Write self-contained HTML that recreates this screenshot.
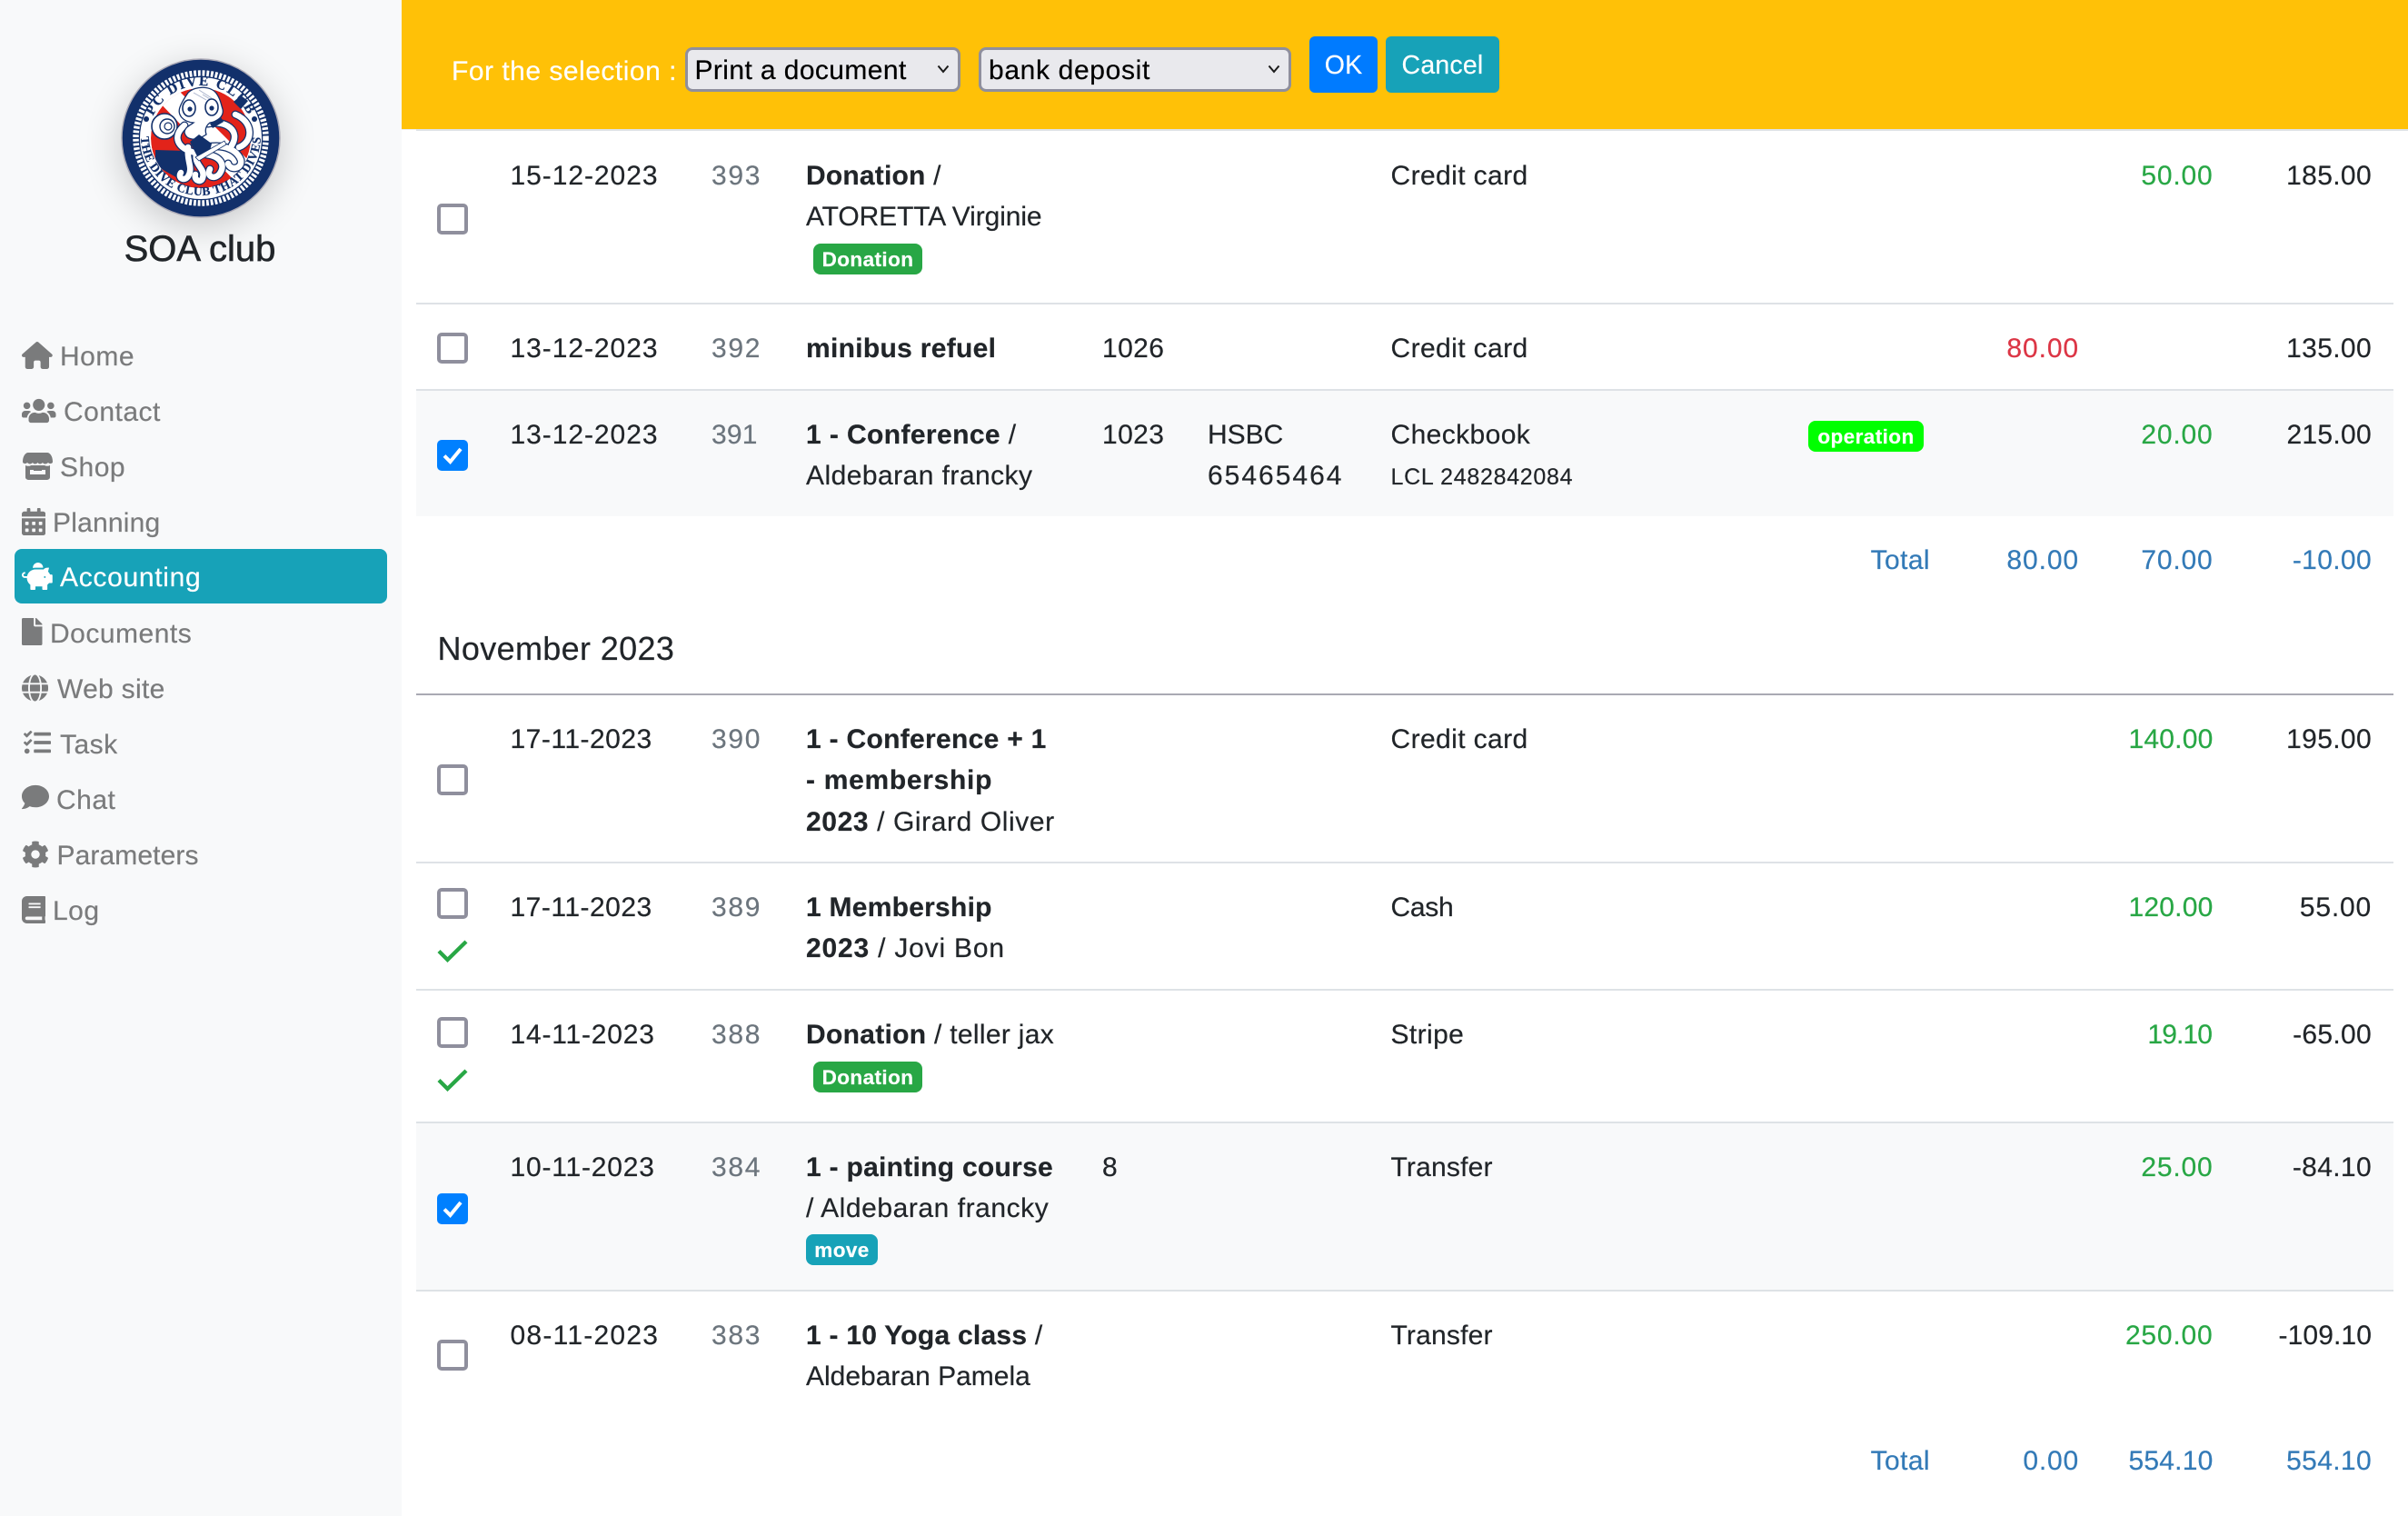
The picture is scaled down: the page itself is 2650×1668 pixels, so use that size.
<!DOCTYPE html>
<html><head><meta charset="utf-8"><title>SOA club</title>
<style>
*{box-sizing:border-box}
html,body{margin:0;padding:0;background:#fff}
body{width:2650px;height:1668px;position:relative;overflow:hidden;font-family:"Liberation Sans",sans-serif;font-size:30px;color:#212529;-webkit-text-stroke:.2px}
.a,.t,.n,.r{position:absolute;white-space:nowrap}
.t{line-height:45px;letter-spacing:.4px;margin-top:.5px}
.n{line-height:45px;letter-spacing:.8px;margin-top:.5px}
.r{line-height:45px;letter-spacing:.8px;margin-top:.5px}
.m{color:#6c757d;letter-spacing:1.7px}.g{color:#28a745}.x{color:#dc3545}.b{color:#337ab7}
b{font-weight:700}
.sb{position:absolute;left:0;top:0;width:442px;height:1668px;background:#f8f9fa}
.nv{position:absolute;line-height:45px;color:#7a7b7c;letter-spacing:.5px;white-space:nowrap;margin-top:.5px}
.ic{position:absolute;fill:#7a7b7c;height:30px}
.ln{position:absolute;left:458px;width:2176px;height:2px;background:#dee2e6}
.bg{position:absolute;left:458px;width:2176px;background:#f8f9fa}
.cb{position:absolute;left:481px;width:34px;height:34px;border:4px solid #8f8f9d;border-radius:5px;background:#fff}
.cc{position:absolute;left:481px;width:34px;height:34px;border-radius:5px;background:#0080ff}
.bd{position:absolute;color:#fff;font-weight:700;font-size:22.5px;line-height:35px;height:34px;text-align:center;border-radius:8px;letter-spacing:.42px}
.sel{position:absolute;top:52px;height:49px;background:#e9e9ed;border:3px solid #8f8f9d;border-radius:8px;color:#000;line-height:45px;letter-spacing:.4px}
.btn{position:absolute;top:40px;height:62px;border-radius:6px;color:#fff;text-align:center;line-height:64px;font-size:28.5px;letter-spacing:.2px}
</style></head><body>

<div class="sb"></div>
<div class="a" style="left:134px;top:65px;width:174px;height:174px;border-radius:50%;box-shadow:0 10px 42px rgba(0,0,0,.2)"></div>
<svg class="a" style="left:130px;top:61px;-webkit-text-stroke:0" width="182" height="182" viewBox="-91 -91 182 182">
<defs>
<clipPath id="cl"><circle r="55"/></clipPath>
<path id="tp" d="M-58 0A58 58 0 0 1 58 0"/>
<path id="bp" d="M-66 -3A66 66 0 0 0 66 -3"/>
</defs>
<circle r="87" fill="#12306b" stroke="#aeacb8" stroke-width="1.5"/>
<circle r="71.500" fill="none" stroke="#fff" stroke-width="6.500" stroke-dasharray="2.800 1.900"/>
<circle r="67" fill="#fff"/>
<g clip-path="url(#cl)">
<circle r="55" fill="#e2231a"/>
<path d="M-50 -44L-32 -60 60 32 42 52Z" fill="#fff"/>
<path d="M-50 13L-16 14 -12 34 -22 46 -50 30Z" fill="#12306b"/>
</g>
<circle cx="-60" cy="-21" r="3" fill="#12306b"/>
<circle cx="59" cy="-21" r="3" fill="#12306b"/>
<text font-family="Liberation Serif,serif" font-weight="700" font-size="15.500" letter-spacing="1.800" fill="#12306b" stroke="#12306b" stroke-width=".25"><textPath href="#tp" startOffset="50%" text-anchor="middle">PC DIVE CLUB</textPath></text>
<text font-family="Liberation Serif,serif" font-weight="700" font-size="13.500" letter-spacing=".5" fill="#12306b" stroke="#12306b" stroke-width=".2"><textPath href="#bp" startOffset="50%" text-anchor="middle">THE DIVE CLUB THAT DIVES</textPath></text>
<circle cx="-40" cy="-13" r="14" fill="#fff" stroke="#12306b" stroke-width="1.600"/>
<circle cx="-37" cy="-13" r="8" fill="none" stroke="#12306b" stroke-width="1.400"/>
<circle cx="-36" cy="-13" r="4" fill="none" stroke="#12306b" stroke-width="1.200"/>
<path d="M36 -40l8 -7 8 6 -8 9z" fill="#12306b"/>
<g fill="none" stroke-linecap="round">
<g stroke="#12306b" stroke-width="9">
<path d="M38 -26C58 -18 58 4 42 10"/>
<path d="M-14 10C-16 26 -8 32 -14 42 -18 48 -26 44 -22 38"/>
<path d="M-4 14C-10 30 6 32 2 44 0 50 -8 46 -6 40"/>
<path d="M6 10C28 6 40 14 44 24 46 34 32 36 30 28"/>
<path d="M6 18C22 20 28 30 20 40 14 46 6 42 10 34"/>
<path d="M-18 -14C-32 -2 -26 12 -6 16"/>
<path d="M8 -16C28 -20 44 -8 34 8"/>
</g>
<g stroke="#fff" stroke-width="6.500">
<path d="M38 -26C58 -18 58 4 42 10"/>
<path d="M-14 10C-16 26 -8 32 -14 42 -18 48 -26 44 -22 38"/>
<path d="M-4 14C-10 30 6 32 2 44 0 50 -8 46 -6 40"/>
<path d="M6 10C28 6 40 14 44 24 46 34 32 36 30 28"/>
<path d="M6 18C22 20 28 30 20 40 14 46 6 42 10 34"/>
<path d="M-18 -14C-32 -2 -26 12 -6 16"/>
<path d="M8 -16C28 -20 44 -8 34 8"/>
</g>
</g>
<path d="M-14 -50C-6 -58 12 -58 18 -48 22 -42 22 -38 24 -32 26 -24 18 -18 10 -17 6 -14 4 -10 6 -4 -6 4 -16 2 -18 -6 -18 -12 -12 -14 -8 -17 -20 -18 -26 -26 -23 -34 -21 -40 -18 -44 -14 -50Z" fill="#fff" stroke="#12306b" stroke-width="1.300"/>
<path d="M-8 -50l14 8M-2 -53l14 9M2 -48l8 5" stroke="#aab4cc" stroke-width="1" fill="none"/>
<ellipse cx="-13" cy="-33" rx="7" ry="9" fill="#fff" stroke="#12306b" stroke-width="1.600"/>
<ellipse cx="12" cy="-34" rx="7" ry="9" fill="#fff" stroke="#12306b" stroke-width="1.600"/>
<circle cx="-12" cy="-32" r="2.600" fill="#12306b"/>
<circle cx="12" cy="-33" r="2.600" fill="#12306b"/>
<path d="M10 -16l12 -7 3 5 -12 7z" fill="#12306b"/>
<path d="M-12 4L-2 -4 12 6 10 14 -4 20Z" fill="#12306b"/>
<path d="M-6 21L26 3 28 7 -2 25Z" fill="#fff" stroke="#12306b" stroke-width=".8"/>
</svg>
<div class="a" style="left:-1px;width:442px;text-align:center;top:250px;line-height:48px;font-size:40px;color:#212529;-webkit-text-stroke:.6px">SOA club</div>

<div class="a" style="left:16px;top:604px;width:410px;height:60px;background:#17a2b8;border-radius:8px"></div>

<svg class="ic" style="left:24px;top:376px" viewBox="0 0 576 512"><path d="M575.800 255.500c0 18-15 32.100-32 32.100h-32l.7 160.200c0 2.700-.2 5.400-.5 8.100V472c0 22.100-17.900 40-40 40H456c-1.100 0-2.200 0-3.300-.1-1.400.1-2.800.1-4.200.1H392c-22.100 0-40-17.900-40-40V384c0-17.700-14.300-32-32-32H256c-17.700 0-32 14.300-32 32v88c0 22.100-17.900 40-40 40H128.100c-1.500 0-3-.1-4.500-.2-1.200.1-2.400.2-3.600.2H104c-22.100 0-40-17.900-40-40V360c0-.9 0-1.900.1-2.800V287.600H32c-18 0-32-14-32-32.100 0-9 3-17 10-24L266.400 8c7-7 15-8 22-8s15 2 21 7L564.800 231.500c8 7 12 15 11 24z"/></svg>
<div class="nv" style="left:66px;top:369px">Home</div>

<svg class="ic" style="left:24px;top:437px" viewBox="0 0 640 512"><path d="M96 224c35.300 0 64-28.700 64-64s-28.700-64-64-64-64 28.700-64 64 28.700 64 64 64zm448 0c35.300 0 64-28.700 64-64s-28.700-64-64-64-64 28.700-64 64 28.700 64 64 64zm32 32h-64c-17.600 0-33.500 7.100-45.100 18.600 40.300 22.100 68.900 62 75.100 109.400h66c17.700 0 32-14.300 32-32v-32c0-35.300-28.700-64-64-64zm-256 0c61.900 0 112-50.100 112-112S381.900 32 320 32 208 82.100 208 144s50.100 112 112 112zm76.800 32h-8.300c-20.800 10-43.900 16-68.500 16s-47.600-6-68.500-16h-8.300C179.600 288 128 339.600 128 403.200V432c0 26.500 21.500 48 48 48h288c26.500 0 48-21.500 48-48v-28.800c0-63.600-51.600-115.200-115.200-115.200zm-223.700-13.400C161.500 263.100 145.600 256 128 256H64c-35.300 0-64 28.700-64 64v32c0 17.700 14.300 32 32 32h65.900c6.300-47.400 34.900-87.300 75.200-109.400z"/></svg>
<div class="nv" style="left:70px;top:430px">Contact</div>

<svg class="ic" style="left:25px;top:498px;width:33px" viewBox="0 0 33 30"><path d="M6 0H27C30 0 33 4 33 10 33 12 30 13 28 11 26 13 23 13 22 11 20 13 18 13 16.500 11 15 13 12 13 11 11 9 13 7 13 5 11 3 13 0 12 0 10 0 4 3 0 6 0Z"/><path fill-rule="evenodd" d="M3 14C5 15 8 15 9 14V14H24C26 15 28 15 30 14V27C30 29 28 30 26 30H7C5 30 3 29 3 27ZM8 19V24H25V19H21V20H12V19Z"/></svg>
<div class="nv" style="left:66px;top:491px">Shop</div>

<svg class="ic" style="left:24px;top:559px" viewBox="0 0 448 512"><path d="M0 464c0 26.500 21.500 48 48 48h352c26.500 0 48-21.500 48-48V192H0v272zm320-196c0-6.600 5.400-12 12-12h40c6.600 0 12 5.400 12 12v40c0 6.600-5.400 12-12 12h-40c-6.600 0-12-5.400-12-12v-40zm0 128c0-6.600 5.400-12 12-12h40c6.600 0 12 5.400 12 12v40c0 6.600-5.400 12-12 12h-40c-6.600 0-12-5.400-12-12v-40zM192 268c0-6.600 5.400-12 12-12h40c6.600 0 12 5.400 12 12v40c0 6.600-5.400 12-12 12h-40c-6.600 0-12-5.400-12-12v-40zm0 128c0-6.600 5.400-12 12-12h40c6.600 0 12 5.400 12 12v40c0 6.600-5.400 12-12 12h-40c-6.600 0-12-5.400-12-12v-40zM64 268c0-6.600 5.400-12 12-12h40c6.600 0 12 5.400 12 12v40c0 6.600-5.400 12-12 12H76c-6.600 0-12-5.400-12-12v-40zm0 128c0-6.600 5.400-12 12-12h40c6.600 0 12 5.400 12 12v40c0 6.600-5.400 12-12 12H76c-6.600 0-12-5.400-12-12v-40zM400 64h-48V16c0-8.800-7.200-16-16-16h-32c-8.800 0-16 7.200-16 16v48H160V16c0-8.800-7.200-16-16-16h-32c-8.800 0-16 7.200-16 16v48H48C21.500 64 0 85.500 0 112v48h448v-48c0-26.500-21.500-48-48-48z"/></svg>
<div class="nv" style="left:58px;top:552px;letter-spacing:.2px">Planning</div>

<svg class="ic" style="left:24px;top:619px;fill:#fff" viewBox="0 0 576 512"><path d="M560 224h-29.500c-8.800-20-21.600-37.700-37.400-52.500L512 96h-32c-29.400 0-55.400 13.500-73 34.300-7.600-1.100-15.100-2.300-23-2.300H256c-77.400 0-141.900 55-156.800 128H56c-14.800 0-26.500-13.500-23.500-28.800C34.700 215.800 45.400 208 57 208h1c3.300 0 6-2.700 6-6v-20c0-3.300-2.700-6-6-6-28.500 0-53.900 20.400-57.500 48.600C-3.900 258.800 22.700 288 56 288h40c0 52.200 25.400 98.100 64 127.300V496c0 8.800 7.200 16 16 16h64c8.800 0 16-7.200 16-16v-48h128v48c0 8.800 7.200 16 16 16h64c8.800 0 16-7.200 16-16v-80.700c11.800-8.900 22.300-19.400 31.300-31.300H560c8.800 0 16-7.200 16-16V240c0-8.800-7.200-16-16-16zm-128 64c-8.800 0-16-7.200-16-16s7.200-16 16-16 16 7.200 16 16-7.200 16-16 16zM256 96h128c5.400 0 10.700.4 15.900.8 0-.3.1-.5.1-.8 0-53-43-96-96-96s-96 43-96 96c0 2.100.5 4.100.6 6.200 15.200-3.900 31-6.200 47.400-6.200z"/></svg>
<div class="nv" style="left:66px;top:612px;color:#fff;letter-spacing:.7px">Accounting</div>

<svg class="ic" style="left:24px;top:680px" viewBox="0 0 384 512"><path d="M224 136V0H24C10.700 0 0 10.700 0 24v464c0 13.300 10.700 24 24 24h336c13.300 0 24-10.700 24-24V160H248c-13.200 0-24-10.800-24-24zm160-14.100v6.100H256V0h6.100c6.400 0 12.500 2.500 17 7l97.900 98c4.500 4.500 7 10.600 7 16.900z"/></svg>
<div class="nv" style="left:55px;top:674px">Documents</div>

<svg class="ic" style="left:24px;top:742px" viewBox="0 0 496 512"><path d="M336.500 160C322 70.700 287.800 8 248 8s-74 62.700-88.500 152h177zM152 256c0 22.200 1.200 43.500 3.300 64h185.300c2.100-20.500 3.300-41.800 3.300-64s-1.200-43.500-3.300-64H155.300c-2.100 20.500-3.300 41.800-3.300 64zm324.700-96c-28.600-67.900-86.500-120.400-158-141.600 24.400 33.800 41.200 84.700 50 141.600h108zM177.200 18.400C105.800 39.600 47.800 92.100 19.300 160h108c8.700-56.900 25.500-107.800 49.900-141.600zM487.400 192H372.700c2.100 21 3.300 42.500 3.300 64s-1.200 43-3.300 64h114.600c5.500-20.500 8.600-41.800 8.600-64s-3.100-43.500-8.500-64zM120 256c0-21.500 1.200-43 3.300-64H8.600C3.200 212.500 0 233.800 0 256s3.200 43.500 8.600 64h114.600c-2-21-3.200-42.500-3.200-64zm39.500 96c14.500 89.300 48.700 152 88.500 152s74-62.700 88.500-152h-177zm159.300 141.600c71.400-21.200 129.400-73.700 158-141.600h-108c-8.800 56.900-25.600 107.800-50 141.600zM19.300 352c28.600 67.900 86.500 120.400 158 141.600-24.400-33.800-41.200-84.700-50-141.600h-108z"/></svg>
<div class="nv" style="left:63px;top:735px;letter-spacing:.3px">Web site</div>

<svg class="ic" style="left:26px;top:802px" viewBox="0 0 512 512"><path d="M139.610 35.500a12 12 0 0 0-17 0L58.930 98.810l-22.700-22.120a12 12 0 0 0-17 0L3.530 92.410a12 12 0 0 0 0 17l47.590 47.400a12.780 12.780 0 0 0 17.610 0l15.590-15.620L156.520 69a12.090 12.090 0 0 0 .09-17zm0 159.190a12 12 0 0 0-17 0l-63.680 63.720-22.700-22.100a12 12 0 0 0-17 0L3.530 252a12 12 0 0 0 0 17L51 316.500a12.770 12.770 0 0 0 17.600 0l15.700-15.690 72.200-72.220a12 12 0 0 0 .09-16.900zM64 368c-26.490 0-48.590 21.500-48.590 48S37.530 464 64 464a48 48 0 0 0 0-96zm432 16H208a16 16 0 0 0-16 16v32a16 16 0 0 0 16 16h288a16 16 0 0 0 16-16v-32a16 16 0 0 0-16-16zm0-320H208a16 16 0 0 0-16 16v32a16 16 0 0 0 16 16h288a16 16 0 0 0 16-16V80a16 16 0 0 0-16-16zm0 160H208a16 16 0 0 0-16 16v32a16 16 0 0 0 16 16h288a16 16 0 0 0 16-16v-32a16 16 0 0 0-16-16z"/></svg>
<div class="nv" style="left:66px;top:796px">Task</div>

<svg class="ic" style="left:24px;top:862px" viewBox="0 0 512 512"><path d="M256 32C114.600 32 0 125.100 0 240c0 49.600 21.400 95 57 130.700C44.500 421.100 2.700 466 2.200 466.500c-2.200 2.300-2.800 5.700-1.500 8.700S4.800 480 8 480c66.300 0 116-31.800 140.600-51.400 32.700 12.300 69 19.400 107.400 19.400 141.400 0 256-93.100 256-208S397.400 32 256 32z"/></svg>
<div class="nv" style="left:62px;top:857px">Chat</div>

<svg class="ic" style="left:24px;top:925px" viewBox="0 0 512 512"><path d="M487.400 315.700l-42.600-24.600c4.300-23.200 4.300-47 0-70.200l42.600-24.600c4.900-2.800 7.100-8.600 5.500-14-11.100-35.600-30-67.800-54.700-94.600-3.800-4.100-10-5.100-14.800-2.300L380.800 110c-17.900-15.400-38.500-27.300-60.800-35.100V25.800c0-5.600-3.900-10.500-9.400-11.700-36.700-8.200-74.300-7.800-109.200 0-5.500 1.200-9.400 6.100-9.400 11.700V75c-22.200 7.900-42.800 19.800-60.800 35.100L88.700 85.500c-4.900-2.800-11-1.900-14.800 2.300-24.700 26.700-43.600 58.900-54.700 94.600-1.700 5.400.6 11.200 5.500 14L67.300 221c-4.300 23.200-4.300 47 0 70.200l-42.600 24.600c-4.900 2.800-7.100 8.600-5.500 14 11.100 35.600 30 67.800 54.700 94.600 3.800 4.100 10 5.100 14.800 2.300l42.600-24.600c17.900 15.400 38.500 27.300 60.800 35.100v49.200c0 5.600 3.900 10.500 9.400 11.700 36.700 8.200 74.300 7.800 109.200 0 5.500-1.200 9.400-6.100 9.400-11.700v-49.200c22.200-7.900 42.800-19.800 60.800-35.100l42.600 24.600c4.900 2.800 11 1.900 14.800-2.300 24.700-26.700 43.600-58.900 54.700-94.600 1.500-5.500-.7-11.300-5.600-14.100zM256 336c-44.100 0-80-35.900-80-80s35.900-80 80-80 80 35.900 80 80-35.900 80-80 80z"/></svg>
<div class="nv" style="left:62.500px;top:918px;letter-spacing:.1px">Parameters</div>

<svg class="ic" style="left:24px;top:986px" viewBox="0 0 448 512"><path d="M448 360V24c0-13.300-10.700-24-24-24H96C43 0 0 43 0 96v320c0 53 43 96 96 96h328c13.300 0 24-10.700 24-24v-16c0-7.500-3.500-14.300-8.900-18.700-4.200-15.400-4.200-59.300 0-74.700 5.400-4.300 8.900-11.100 8.900-18.600zM128 134c0-3.300 2.700-6 6-6h212c3.300 0 6 2.700 6 6v20c0 3.300-2.700 6-6 6H134c-3.300 0-6-2.700-6-6v-20zm0 64c0-3.300 2.700-6 6-6h212c3.300 0 6 2.700 6 6v20c0 3.300-2.700 6-6 6H134c-3.300 0-6-2.700-6-6v-20zm253.400 250H96c-17.700 0-32-14.300-32-32 0-17.600 14.400-32 32-32h285.400c-1.900 17.100-1.900 46.900 0 64z"/></svg>
<div class="nv" style="left:58px;top:979px">Log</div>

<!-- top bar -->
<div class="a" style="left:442px;top:0;width:2208px;height:142px;background:#ffc107"></div>
<div class="a" style="left:442px;top:142px;width:2208px;height:1px;background:#eceef0"></div>
<div class="a" style="left:458px;top:142px;width:2192px;height:2px;background:#dee2e6"></div>
<div class="t" style="left:497px;top:55px;color:#fff;letter-spacing:.5px">For the selection :</div>
<div class="sel" style="left:753.500px;width:303px;padding-left:8px">Print a document
<svg class="a" style="left:274px;top:16px" width="14" height="10" viewBox="0 0 14 10"><path d="M1.500 1.500L7 8 12.500 1.500" fill="none" stroke="#1a1a1a" stroke-width="2"/></svg></div>
<div class="sel" style="left:1077px;width:344px;padding-left:8px;letter-spacing:.65px">bank deposit
<svg class="a" style="left:315px;top:16px" width="14" height="10" viewBox="0 0 14 10"><path d="M1.500 1.500L7 8 12.500 1.500" fill="none" stroke="#1a1a1a" stroke-width="2"/></svg></div>
<div class="btn" style="left:1441px;width:75px;background:#007bff">OK</div>
<div class="btn" style="left:1525px;width:125px;background:#17a2b8">Cancel</div>

<!-- rows backgrounds -->
<div class="bg" style="top:430px;height:138px"></div>
<div class="bg" style="top:1236px;height:183px"></div>

<div class="ln" style="top:333px"></div>
<div class="ln" style="top:428px"></div>
<div class="ln" style="top:763px;background:#a9a9b3"></div>
<div class="ln" style="top:948px"></div>
<div class="ln" style="top:1088px"></div>
<div class="ln" style="top:1234px"></div>
<div class="ln" style="top:1419px"></div>

<!-- Row 1 -->
<div class="cb" style="top:224px"></div>
<div class="n" style="left:561.500px;top:170px;letter-spacing:.95px">15-12-2023</div>
<div class="n m" style="left:783px;top:170px">393</div>
<div class="t" style="left:887px;top:170px;letter-spacing:.2px"><b>Donation</b> /</div>
<div class="t" style="left:887px;top:215px;letter-spacing:-.1px">ATORETTA Virginie</div>
<div class="bd" style="left:895px;top:268px;width:120px;background:#28a745">Donation</div>
<div class="t" style="left:1530.500px;top:170px">Credit card</div>
<div class="r g" style="right:214.500px;top:170px">50.00</div>
<div class="r" style="right:40px;top:170px;letter-spacing:.35px">185.00</div>

<!-- Row 2 -->
<div class="cb" style="top:366px"></div>
<div class="n" style="left:561.500px;top:360px;letter-spacing:.95px">13-12-2023</div>
<div class="n m" style="left:783px;top:360px">392</div>
<div class="t" style="left:887px;top:360px;letter-spacing:.3px"><b>minibus refuel</b></div>
<div class="n" style="left:1213px;top:360px;letter-spacing:.4px">1026</div>
<div class="t" style="left:1530.500px;top:360px">Credit card</div>
<div class="r x" style="right:362px;top:360px;letter-spacing:.9px">80.00</div>
<div class="r" style="right:40px;top:360px;letter-spacing:.35px">135.00</div>

<!-- Row 3 -->
<div class="cc" style="top:484px"><svg width="34" height="34" viewBox="0 0 34 34"><path d="M8 17.500L14.500 24 26 10" fill="none" stroke="#fff" stroke-width="4"/></svg></div>
<div class="n" style="left:561.500px;top:455px;letter-spacing:.95px">13-12-2023</div>
<div class="n m" style="left:783px;top:455px;letter-spacing:.2px">391</div>
<div class="t" style="left:887px;top:455px"><b>1 - Conference</b> /</div>
<div class="t" style="left:887px;top:500px;letter-spacing:.45px">Aldebaran francky</div>
<div class="n" style="left:1213px;top:455px;letter-spacing:.4px">1023</div>
<div class="t" style="left:1329px;top:455px;letter-spacing:0">HSBC</div>
<div class="n" style="left:1329px;top:500px;letter-spacing:2px">65465464</div>
<div class="t" style="left:1530.500px;top:455px">Checkbook</div>
<div class="t" style="left:1530.500px;top:502px;font-size:25px;letter-spacing:.7px">LCL 2482842084</div>
<div class="bd" style="left:1990px;top:463px;width:127px;background:#0f0">operation</div>
<div class="r g" style="right:214.500px;top:455px">20.00</div>
<div class="r" style="right:40px;top:455px;letter-spacing:.3px">215.00</div>

<!-- Total 1 -->
<div class="r b" style="right:526px;top:593px;letter-spacing:.4px">Total</div>
<div class="r b" style="right:362px;top:593px;letter-spacing:.9px">80.00</div>
<div class="r b" style="right:214.500px;top:593px">70.00</div>
<div class="r b" style="right:40px;top:593px;letter-spacing:.35px">-10.00</div>

<div class="a" style="left:481.500px;top:691px;font-size:36px;line-height:46px;letter-spacing:.35px">November 2023</div>

<!-- Row 4 -->
<div class="cb" style="top:841px"></div>
<div class="n" style="left:561.500px;top:790px;letter-spacing:.5px">17-11-2023</div>
<div class="n m" style="left:783px;top:790px">390</div>
<div class="t" style="left:887px;top:790px;letter-spacing:.3px"><b>1 - Conference + 1</b></div>
<div class="t" style="left:887px;top:835px;letter-spacing:.7px"><b>- membership</b></div>
<div class="t" style="left:887px;top:881px;letter-spacing:.6px"><b>2023</b> / Girard Oliver</div>
<div class="t" style="left:1530.500px;top:790px">Credit card</div>
<div class="r g" style="right:214.500px;top:790px;letter-spacing:.2px">140.00</div>
<div class="r" style="right:40px;top:790px;letter-spacing:.35px">195.00</div>

<!-- Row 5 -->
<div class="cb" style="top:977px"></div>
<svg class="a" style="left:481px;top:1034px" width="34" height="25" viewBox="0 0 34 25"><path d="M2 12.500L11.500 22 32 2" fill="none" stroke="#28a745" stroke-width="4.300"/></svg>
<div class="n" style="left:561.500px;top:975px;letter-spacing:.5px">17-11-2023</div>
<div class="n m" style="left:783px;top:975px">389</div>
<div class="t" style="left:887px;top:975px;letter-spacing:.25px"><b>1 Membership</b></div>
<div class="t" style="left:887px;top:1020px;letter-spacing:.8px"><b>2023</b> / Jovi Bon</div>
<div class="t" style="left:1530.500px;top:975px;letter-spacing:-.3px">Cash</div>
<div class="r g" style="right:214.500px;top:975px;letter-spacing:.2px">120.00</div>
<div class="r" style="right:40px;top:975px">55.00</div>

<!-- Row 6 -->
<div class="cb" style="top:1119px"></div>
<svg class="a" style="left:481px;top:1176px" width="34" height="25" viewBox="0 0 34 25"><path d="M2 12.500L11.500 22 32 2" fill="none" stroke="#28a745" stroke-width="4.300"/></svg>
<div class="n" style="left:561.500px;top:1115px;letter-spacing:.8px">14-11-2023</div>
<div class="n m" style="left:783px;top:1115px">388</div>
<div class="t" style="left:887px;top:1115px;letter-spacing:.3px"><b>Donation</b> / teller jax</div>
<div class="bd" style="left:895px;top:1168px;width:120px;background:#28a745">Donation</div>
<div class="t" style="left:1530.500px;top:1115px">Stripe</div>
<div class="r g" style="right:216px;top:1115px;letter-spacing:-.9px">19.10</div>
<div class="r" style="right:40px;top:1115px;letter-spacing:.3px">-65.00</div>

<!-- Row 7 -->
<div class="cc" style="top:1313px"><svg width="34" height="34" viewBox="0 0 34 34"><path d="M8 17.500L14.500 24 26 10" fill="none" stroke="#fff" stroke-width="4"/></svg></div>
<div class="n" style="left:561.500px;top:1261px;letter-spacing:.8px">10-11-2023</div>
<div class="n m" style="left:783px;top:1261px">384</div>
<div class="t" style="left:887px;top:1261px;letter-spacing:.28px"><b>1 - painting course</b></div>
<div class="t" style="left:887px;top:1306px;letter-spacing:.55px">/ Aldebaran francky</div>
<div class="bd" style="left:887px;top:1358px;width:79px;background:#17a2b8">move</div>
<div class="n" style="left:1213px;top:1261px">8</div>
<div class="t" style="left:1530.500px;top:1261px;letter-spacing:.2px">Transfer</div>
<div class="r g" style="right:214.500px;top:1261px">25.00</div>
<div class="r" style="right:40px;top:1261px;letter-spacing:.35px">-84.10</div>

<!-- Row 8 -->
<div class="cb" style="top:1474px"></div>
<div class="n" style="left:561.500px;top:1446px;letter-spacing:1.25px">08-11-2023</div>
<div class="n m" style="left:783px;top:1446px">383</div>
<div class="t" style="left:887px;top:1446px;letter-spacing:.25px"><b>1 - 10 Yoga class</b> /</div>
<div class="t" style="left:887px;top:1491px;letter-spacing:0">Aldebaran Pamela</div>
<div class="t" style="left:1530.500px;top:1446px;letter-spacing:.2px">Transfer</div>
<div class="r g" style="right:214.500px;top:1446px">250.00</div>
<div class="r" style="right:40px;top:1446px;letter-spacing:.1px">-109.10</div>

<!-- Total 2 -->
<div class="r b" style="right:526px;top:1584px;letter-spacing:.4px">Total</div>
<div class="r b" style="right:362px;top:1584px">0.00</div>
<div class="r b" style="right:214.500px;top:1584px;letter-spacing:.2px">554.10</div>
<div class="r b" style="right:40px;top:1584px;letter-spacing:.35px">554.10</div>

</body></html>
